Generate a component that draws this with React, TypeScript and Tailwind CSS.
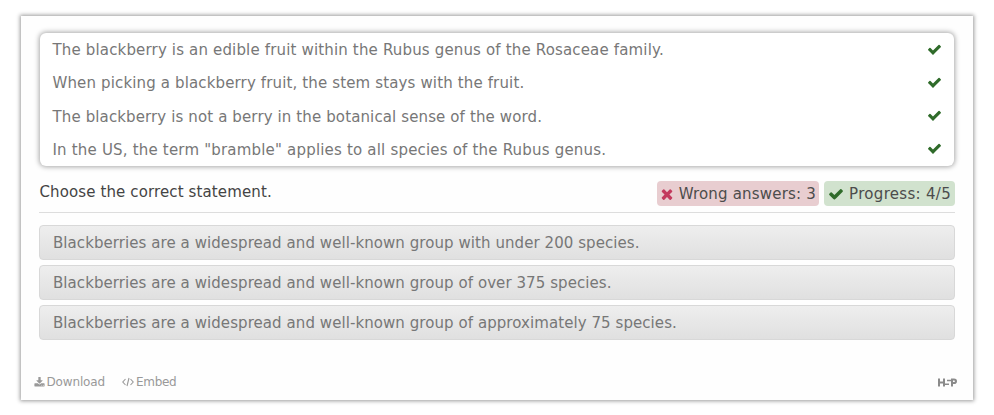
import React from "react";

const CHECK =
  "M1671 566q0 40-28 68l-724 724-136 136q-28 28-68 28t-68-28l-136-136-362-362q-28-28-28-68t28-68l136-136q28-28 68-28t68 28l294 295 656-657q28-28 68-28t68 28l136 136q28 28 28 68z";
const CROSS =
  "M1490 1322q0 40-28 68l-136 136q-28 28-68 28t-68-28l-294-294-294 294q-28 28-68 28t-68-28l-136-136q-28-28-28-68t28-68l294-294-294-294q-28-28-28-68t28-68l136-136q28-28 68-28t68 28l294 294 294-294q28-28 68-28t68 28l136 136q28 28 28 68t-28 68l-294 294 294 294q28 28 28 68z";
const DOWNLOAD =
  "M1344 1344q0-26-19-45t-45-19-45 19-19 45 19 45 45 19 45-19 19-45zm256 0q0-26-19-45t-45-19-45 19-19 45 19 45 45 19 45-19 19-45zm128-224v320q0 40-28 68t-68 28h-1472q-40 0-68-28t-28-68v-320q0-40 28-68t68-28h465l135 136q58 56 136 56t136-56l136-136h464q40 0 68 28t28 68zm-325-569q17 41-14 70l-448 448q-18 19-45 19t-45-19l-448-448q-31-29-14-70 17-39 59-39h256v-448q0-26 19-45t45-19h256q26 0 45 19t19 45v448h256q42 0 59 39z";

function Glyph({ d, className, viewBox = "0 0 1792 1792" }: { d: string; className: string; viewBox?: string }) {
  return (
    <svg viewBox={viewBox} fill="currentColor" className={`shrink-0 ${className}`} aria-hidden="true">
      <path d={d} />
    </svg>
  );
}

const solved = [
  { text: "The blackberry is an edible fruit within the Rubus genus of the Rosaceae family.", tracking: "tracking-[0.16px]" },
  { text: "When picking a blackberry fruit, the stem stays with the fruit.", tracking: "tracking-[0.14px]" },
  { text: "The blackberry is not a berry in the botanical sense of the word.", tracking: "tracking-[0.12px]" },
  { text: 'In the US, the term "bramble" applies to all species of the Rubus genus.', tracking: "tracking-[0.19px]" },
];

const choices = [
  "Blackberries are a widespread and well-known group with under 200 species.",
  "Blackberries are a widespread and well-known group of over 375 species.",
  "Blackberries are a widespread and well-known group of approximately 75 species.",
];

export default function App() {
  return (
    <div className="h-[415px] w-[994px] overflow-hidden bg-white pt-4 pl-[21px] font-[Verdana,'DejaVu_Sans',sans-serif] text-[15px] text-[#777]">
      <main className="flex h-96 w-[952px] flex-col bg-[#fefefe] px-[18px] pt-[17px] shadow-[0_0_4px_1px_rgba(0,0,0,0.4)]">
        <ul className="ml-px flex h-[133px] w-[914px] shrink-0 flex-col rounded-md bg-white pr-[13px] pl-[12.5px] shadow-[0_0_5px_1px_rgba(0,0,0,0.34)]">
          {solved.map(({ text, tracking }) => (
            <li key={text} className="flex h-[33.4px] items-center justify-between whitespace-nowrap">
              <span className={`pt-[1.4px] ${tracking}`}>{text}</span>
              <Glyph d={CHECK} className="-mr-px mb-px size-[15px] text-[#2f6b2a]" />
            </li>
          ))}
        </ul>

        <section className="flex h-[47px] w-[916px] shrink-0 justify-between border-b border-[#ddd] pt-[15px]">
          <h1 className="h-6 pl-[0.5px] leading-[22px] tracking-[0.12px] text-[#444]">Choose the correct statement.</h1>
          <div className="flex gap-[5px] whitespace-nowrap text-[#4c4c4c]">
            <div className="flex h-[25px] w-[162px] items-center justify-between rounded bg-[#e8cdd0] pr-[3px] pl-[2px]">
              <Glyph d={CROSS} className="size-[16px] text-[#c33a5e]" />
              <span className="pt-px tracking-[0.19px]">Wrong answers: 3</span>
            </div>
            <div className="flex h-[25px] w-[131px] items-center justify-between rounded bg-[#d1e2ce] px-[4px]">
              <Glyph d={CHECK} className="size-[16px] text-[#2f6b2a]" />
              <span className="pt-px tracking-[0.3px]">Progress: 4/5</span>
            </div>
          </div>
        </section>

        <ul className="mt-3 flex w-[916px] flex-col gap-[5px]">
          {choices.map((text) => (
            <li
              key={text}
              className="flex h-[35px] items-center whitespace-nowrap rounded border border-[#d8d8d8] bg-linear-to-b from-[#eeeeee] to-[#e0e0e0] pt-[2px] pl-[13px] tracking-[0.07px]"
            >
              {text}
            </li>
          ))}
        </ul>

        <footer className="-mr-[4px] -ml-[5.5px] mt-8 flex h-5 items-center text-[12px] text-[#999]">
          <Glyph d={DOWNLOAD} className="mr-[2px] size-[11px]" />
          <span className="w-[75px] tracking-[-0.15px]">Download</span>
          <svg viewBox="0 0 12 10" className="mr-[2.5px] h-[10px] w-[12px]" fill="none" stroke="currentColor" strokeWidth="1.1" aria-hidden="true">
            <path d="M3.5 2 .8 5l2.7 3M8.5 2l2.7 3-2.7 3M7 1 5 9" />
          </svg>
          <span className="tracking-[-0.3px]">Embed</span>
          <svg viewBox="0 0 20 10" className="mt-[2px] mr-[2px] ml-auto h-[10px] w-[20px]" fill="none" stroke="#8b8b8b" strokeWidth="2" aria-hidden="true">
            <path d="M2 .5v8M2 4.500H8M7 .5v8M15 8.500v-7h2q2 0 2 1.800t-2 1.800h-3" />
            <path d="M8 6.300h4M10 2.500h5" strokeWidth="1.500" />
          </svg>
        </footer>
      </main>
    </div>
  );
}
